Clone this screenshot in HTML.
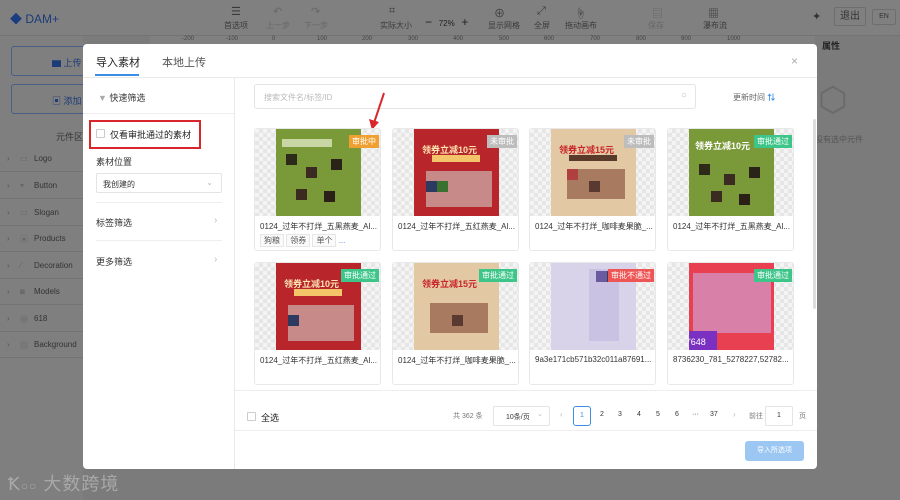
<!DOCTYPE html>
<html><head><meta charset="utf-8"><style>
*{margin:0;padding:0;box-sizing:border-box}
body{width:900px;height:500px;overflow:hidden;position:relative;background:#7b7b7b;font-family:"Liberation Sans","Noto Sans CJK SC",sans-serif;color:#333;font-size:9px}
.a{position:absolute}
.top{left:0;top:0;width:900px;height:36px;background:#808080;border-bottom:1px solid #747474}
.tb{position:absolute;top:20px;font-size:8px;color:#3a3a3a;text-align:center}
.tbi{position:absolute;top:5px;font-size:11px;color:#3a3a3a}
.side{left:0;top:36px;width:83px;height:464px;background:#7f7f7f}
.row{position:absolute;left:0;width:83px;height:26px;border-bottom:1px solid #737373;font-size:8px;color:#333}
.modal{left:83px;top:44px;width:734px;height:425px;background:#fff;border-radius:4px}
.card{position:absolute;width:127px;height:123px;border:1px solid #e8e8e8;border-radius:3px;background:#fff}
.img{position:absolute;left:0;top:0;width:125px;height:87px;background-color:#f4f4f4;background-image:linear-gradient(45deg,#e6e6e6 25%,transparent 25%,transparent 75%,#e6e6e6 75%),linear-gradient(45deg,#e6e6e6 25%,transparent 25%,transparent 75%,#e6e6e6 75%);background-size:8px 8px;background-position:0 0,4px 4px}
.pic{position:absolute;left:21px;top:0;width:85px;height:87px}
.badge{position:absolute;top:6px;right:1px;color:#fff;font-size:8px;padding:1px 3px}
.fn{position:absolute;left:5px;top:92px;font-size:8px;color:#333;white-space:nowrap}
.px{position:absolute;width:11px;height:11px}
.pg{position:absolute;top:367px;font-size:7px;color:#333}
</style></head><body>
<div class="a top">
 <div class="a" style="left:10px;top:10px;font-size:12px;color:#1a3d80;font-weight:bold">◆<span style="font-weight:normal;color:#1d3b78"> DAM+</span></div>
 <div class="tbi" style="left:231px">☰</div><div class="tb" style="left:224px">首选项</div>
 <div class="tbi" style="left:273px;color:#666">↶</div><div class="tb" style="left:266px;color:#666">上一步</div>
 <div class="tbi" style="left:311px;color:#666">↷</div><div class="tb" style="left:304px;color:#666">下一步</div>
 <div class="tbi" style="left:389px">⌗</div><div class="tb" style="left:380px">实际大小</div>
 <div class="a" style="left:425px;top:15px;font-size:12px;color:#222">−&nbsp; <span style="font-size:8px">72%</span> &nbsp;+</div>
 <div class="tbi" style="left:494px">⊕</div><div class="tb" style="left:488px">显示网格</div>
 <div class="tbi" style="left:537px">⤢</div><div class="tb" style="left:534px">全屏</div>
 <div class="tbi" style="left:575px">☝</div><div class="tb" style="left:565px">拖动画布</div>
 <div class="tbi" style="left:652px;color:#666">▤</div><div class="tb" style="left:648px;color:#666">保存</div>
 <div class="tbi" style="left:708px">▦</div><div class="tb" style="left:703px">瀑布流</div>
 <div class="a" style="left:812px;top:10px;font-size:11px">✦</div>
 <div class="a" style="left:834px;top:7px;width:32px;height:19px;border:1px solid #6e6e6e;border-radius:2px;font-size:10px;text-align:center;line-height:17px">退出</div>
 <div class="a" style="left:872px;top:9px;width:24px;height:16px;border:1px solid #6e6e6e;border-radius:2px;font-size:7px;text-align:center;line-height:14px">EN</div>
</div>
<div class="a" style="left:150px;top:36px;width:665px;height:9px;background:#808080;border-bottom:1px solid #6f6f6f;font-size:6px;color:#444">
 <span class="a" style="left:32px">-200</span><span class="a" style="left:76px">-100</span><span class="a" style="left:122px">0</span><span class="a" style="left:167px">100</span><span class="a" style="left:212px">200</span><span class="a" style="left:258px">300</span><span class="a" style="left:303px">400</span><span class="a" style="left:349px">500</span><span class="a" style="left:394px">600</span><span class="a" style="left:440px">700</span><span class="a" style="left:486px">800</span><span class="a" style="left:531px">900</span><span class="a" style="left:577px">1000</span>
</div>
<div class="a side">
 <div class="a" style="left:11px;top:10px;width:80px;height:30px;border:1px solid #4a5f86;border-radius:3px;color:#1d3b78;font-size:9px;padding:9px 0 0 40px"><span style="color:#1d3b78">▆</span> 上传</div>
 <div class="a" style="left:11px;top:48px;width:80px;height:30px;border:1px solid #4a5f86;border-radius:3px;color:#1d3b78;font-size:9px;padding:9px 0 0 40px">▣ 添加</div>
 <div class="a" style="left:56px;top:94px;font-size:9px">元件区</div>
 <div class="row" style="top:110px"><span class="a" style="left:7px;top:8px;color:#555">›</span><span class="a" style="left:20px;top:8px;color:#666">▭</span><span class="a" style="left:34px;top:8px">Logo</span></div>
 <div class="row" style="top:137px"><span class="a" style="left:7px;top:8px;color:#555">›</span><span class="a" style="left:20px;top:8px;color:#666">▾</span><span class="a" style="left:34px;top:8px">Button</span></div>
 <div class="row" style="top:164px"><span class="a" style="left:7px;top:8px;color:#555">›</span><span class="a" style="left:20px;top:8px;color:#666">▭</span><span class="a" style="left:34px;top:8px">Slogan</span></div>
 <div class="row" style="top:190px"><span class="a" style="left:7px;top:8px;color:#555">›</span><span class="a" style="left:20px;top:8px;color:#666">▣</span><span class="a" style="left:34px;top:8px">Products</span></div>
 <div class="row" style="top:217px"><span class="a" style="left:7px;top:8px;color:#555">›</span><span class="a" style="left:20px;top:8px;color:#666">⁄</span><span class="a" style="left:34px;top:8px">Decoration</span></div>
 <div class="row" style="top:243px"><span class="a" style="left:7px;top:8px;color:#555">›</span><span class="a" style="left:20px;top:8px;color:#666">◙</span><span class="a" style="left:34px;top:8px">Models</span></div>
 <div class="row" style="top:270px"><span class="a" style="left:7px;top:8px;color:#555">›</span><span class="a" style="left:20px;top:8px;color:#666">▦</span><span class="a" style="left:34px;top:8px">618</span></div>
 <div class="row" style="top:296px"><span class="a" style="left:7px;top:8px;color:#555">›</span><span class="a" style="left:20px;top:8px;color:#666">▨</span><span class="a" style="left:34px;top:8px">Background</span></div>
</div>
<div class="a" style="left:822px;top:39px;font-size:9px;font-weight:bold;color:#222">属性</div>
<div class="a" style="left:818px;top:80px;font-size:34px;color:#6a6a6a">⬡</div>
<div class="a" style="left:815px;top:134px;font-size:8px;color:#555">没有选中元件</div>
<div class="a" style="left:8px;top:470px;font-size:18px;color:#a8a8a8;letter-spacing:1px">Ꝁ<span style="font-size:12px">○○</span> 大数跨境</div>

<div class="a modal">
 <div class="a" style="left:13px;top:10px;font-size:11px;color:#222">导入素材</div>
 <div class="a" style="left:12px;top:30px;width:44px;height:2px;background:#3a8ee6"></div>
 <div class="a" style="left:79px;top:10px;font-size:11px;color:#555">本地上传</div>
 <div class="a" style="left:708px;top:10px;font-size:12px;color:#aaa">×</div>
 <div class="a" style="left:0;top:33px;width:734px;height:1px;background:#e9e9e9"></div>
 <div class="a" style="left:151px;top:34px;width:1px;height:391px;background:#e9e9e9"></div>
 <div class="a" style="left:15px;top:47px;font-size:9px;color:#333"><span style="color:#aaa">▼</span> 快速筛选</div>
 <div class="a" style="left:0;top:69px;width:151px;height:1px;background:#eee"></div>
 <div class="a" style="left:6px;top:76px;width:112px;height:29px;border:2px solid #d8262a"></div>
 <div class="a" style="left:13px;top:85px;width:9px;height:9px;border:1px solid #ccc;border-radius:1px"></div>
 <div class="a" style="left:27px;top:84px;font-size:9px;color:#222">仅看审批通过的素材</div>
 <div class="a" style="left:13px;top:111px;font-size:9px">素材位置</div>
 <div class="a" style="left:13px;top:129px;width:126px;height:20px;border:1px solid #e4e4e4;border-radius:2px;font-size:8px;padding:5px 0 0 6px">我创建的<span class="a" style="right:8px;top:4px;color:#bbb">⌄</span></div>
 <div class="a" style="left:13px;top:158px;width:126px;height:1px;background:#eee"></div>
 <div class="a" style="left:13px;top:172px;font-size:9px">标签筛选</div><div class="a" style="left:131px;top:171px;color:#bbb;font-size:10px">›</div>
 <div class="a" style="left:13px;top:196px;width:126px;height:1px;background:#eee"></div>
 <div class="a" style="left:13px;top:211px;font-size:9px">更多筛选</div><div class="a" style="left:131px;top:210px;color:#bbb;font-size:10px">›</div>

 <div class="a" style="left:171px;top:40px;width:442px;height:25px;border:1px solid #e4e4e4;border-radius:3px;font-size:8px;color:#bbb;padding:7px 0 0 9px">搜索文件名/标签/ID<span class="a" style="right:8px;top:5px;font-size:10px">○</span></div>
 <div class="a" style="left:650px;top:48px;font-size:8px;color:#666">更新时间 <span style="color:#3a8ee6;font-weight:bold">⇅</span></div>
 <div class="a" style="left:730px;top:75px;width:3px;height:190px;background:#ddd;border-radius:2px"></div>
 <svg class="a" style="left:283px;top:47px" width="22" height="40"><line x1="18" y1="2" x2="8" y2="32" stroke="#d8262a" stroke-width="2"/><polygon points="3,28 13,31 6,39" fill="#d8262a"/></svg>

 <div class="card" style="left:171px;top:84px"><div class="img"><div class="pic" style="background:#7a9a3a"><div class="px" style="left:10px;top:25px;background:#2d2a1a"></div><div class="px" style="left:30px;top:38px;background:#3a2a22"></div><div class="px" style="left:55px;top:30px;background:#2a2418"></div><div class="px" style="left:20px;top:60px;background:#3a2a20"></div><div class="px" style="left:48px;top:62px;background:#2a2018"></div><div class="a" style="left:6px;top:10px;width:50px;height:8px;background:#e8efd0;opacity:.7"></div></div><div class="badge" style="background:#f0a030">审批中</div></div><div class="fn">0124_过年不打烊_五黑燕麦_Al...</div>
  <div class="a" style="left:5px;top:106px;font-size:8px;color:#555"><span style="border:1px solid #e6e6e6;padding:1px 3px;background:#fafafa">狗粮</span> <span style="border:1px solid #e6e6e6;padding:1px 3px;background:#fafafa">领券</span> <span style="border:1px solid #e6e6e6;padding:1px 3px;background:#fafafa">单个</span> <span style="color:#3a8ee6">...</span></div></div>
 <div class="card" style="left:309px;top:84px"><div class="img"><div class="pic" style="background:#b8262c"><div class="a" style="left:8px;top:14px;font-size:9px;color:#ffe3b0;font-weight:bold">领券立减10元</div><div class="a" style="left:18px;top:26px;width:48px;height:7px;background:#f3c46a"></div><div class="a" style="left:12px;top:42px;width:66px;height:36px;background:#c88a88"></div><div class="px" style="left:12px;top:52px;background:#2d3a60"></div><div class="px" style="left:23px;top:52px;background:#3a7030"></div></div><div class="badge" style="background:#bdbdbd">未审批</div></div><div class="fn">0124_过年不打烊_五红燕麦_Al...</div></div>
 <div class="card" style="left:446px;top:84px"><div class="img"><div class="pic" style="background:#e2c9a3"><div class="a" style="left:8px;top:14px;font-size:9px;color:#c8242a;font-weight:bold">领券立减15元</div><div class="a" style="left:18px;top:26px;width:48px;height:6px;background:#5a3a2a"></div><div class="a" style="left:16px;top:40px;width:58px;height:30px;background:#a87a60"></div><div class="px" style="left:16px;top:40px;background:#b04040"></div><div class="px" style="left:38px;top:52px;background:#5a3a30"></div></div><div class="badge" style="background:#bdbdbd">未审批</div></div><div class="fn">0124_过年不打烊_咖啡麦果脆_...</div></div>
 <div class="card" style="left:584px;top:84px"><div class="img"><div class="pic" style="background:#7a9a3a"><div class="a" style="left:6px;top:10px;font-size:9px;color:#fff;font-weight:bold">领券立减10元</div><div class="px" style="left:10px;top:35px;background:#2d2a1a"></div><div class="px" style="left:35px;top:45px;background:#3a2a22"></div><div class="px" style="left:60px;top:38px;background:#2a2418"></div><div class="px" style="left:22px;top:62px;background:#3a2a20"></div><div class="px" style="left:50px;top:65px;background:#2a2018"></div></div><div class="badge" style="background:#3ec58a">审批通过</div></div><div class="fn">0124_过年不打烊_五黑燕麦_Al...</div></div>

 <div class="card" style="left:171px;top:218px"><div class="img"><div class="pic" style="background:#b8262c"><div class="a" style="left:8px;top:14px;font-size:9px;color:#ffe3b0;font-weight:bold">领券立减10元</div><div class="a" style="left:18px;top:26px;width:48px;height:7px;background:#f3c46a"></div><div class="a" style="left:12px;top:42px;width:66px;height:36px;background:#c88a88"></div><div class="px" style="left:12px;top:52px;background:#2d3a60"></div></div><div class="badge" style="background:#3ec58a">审批通过</div></div><div class="fn">0124_过年不打烊_五红燕麦_Al...</div></div>
 <div class="card" style="left:309px;top:218px"><div class="img"><div class="pic" style="background:#e2c9a3"><div class="a" style="left:8px;top:14px;font-size:9px;color:#c8242a;font-weight:bold">领券立减15元</div><div class="a" style="left:16px;top:40px;width:58px;height:30px;background:#a87a60"></div><div class="px" style="left:38px;top:52px;background:#5a3a30"></div></div><div class="badge" style="background:#3ec58a">审批通过</div></div><div class="fn">0124_过年不打烊_咖啡麦果脆_...</div></div>
 <div class="card" style="left:446px;top:218px"><div class="img"><div class="pic" style="background:#d9d3ea"><div class="a" style="left:38px;top:6px;width:30px;height:72px;background:#c9c2e2"></div><div class="px" style="left:45px;top:8px;background:#6a5aa0"></div><div class="px" style="left:56px;top:8px;background:#3a3a5a"></div></div><div class="badge" style="background:#ee5555">审批不通过</div></div><div class="fn">9a3e171cb571b32c011a87691...</div></div>
 <div class="card" style="left:584px;top:218px"><div class="img"><div class="pic" style="background:#e84050"><div class="a" style="left:4px;top:10px;width:78px;height:60px;background:#d880a8"></div><div class="a" style="left:0;top:68px;width:28px;height:19px;background:#7a30c0;color:#fff;font-size:9px;padding-top:6px">'648</div></div><div class="badge" style="background:#3ec58a">审批通过</div></div><div class="fn">8736230_781_5278227,52782...</div></div>

 <div class="a" style="left:152px;top:346px;width:582px;height:1px;background:#eee"></div>
 <div class="a" style="left:164px;top:368px;width:9px;height:9px;border:1px solid #ccc;border-radius:1px"></div>
 <div class="a" style="left:178px;top:367px;font-size:9px;color:#222">全选</div>
 <div class="a" style="left:370px;top:367px;font-size:7px;color:#777">共 362 条</div>
 <div class="a" style="left:410px;top:362px;width:57px;height:20px;border:1px solid #e4e4e4;border-radius:2px;font-size:7px;padding:5px 0 0 12px">10条/页<span class="a" style="right:6px;top:3px;color:#bbb">⌄</span></div>
 <div class="a" style="left:477px;top:366px;font-size:8px;color:#bbb">‹</div>
 <div class="a" style="left:490px;top:362px;width:18px;height:20px;border:1px solid #3a8ee6;border-radius:3px;font-size:7px;color:#3a8ee6;text-align:center;line-height:18px">1</div>
 <div class="pg" style="left:517px">2</div>
 <div class="pg" style="left:535px">3</div>
 <div class="pg" style="left:554px">4</div>
 <div class="pg" style="left:573px">5</div>
 <div class="pg" style="left:592px">6</div>
 <div class="pg" style="left:609px">···</div>
 <div class="pg" style="left:627px">37</div>
 <div class="a" style="left:650px;top:366px;font-size:8px;color:#bbb">›</div>
 <div class="a" style="left:666px;top:367px;font-size:7px;color:#777">前往</div>
 <div class="a" style="left:682px;top:362px;width:28px;height:20px;border:1px solid #e4e4e4;border-radius:2px;font-size:7px;text-align:center;line-height:18px">1</div>
 <div class="a" style="left:716px;top:367px;font-size:7px;color:#777">页</div>
 <div class="a" style="left:152px;top:386px;width:582px;height:1px;background:#eee"></div>
 <div class="a" style="left:662px;top:397px;width:59px;height:20px;background:#9cc7f3;border-radius:3px;font-size:7px;color:#fff;text-align:center;line-height:20px">导入所选项</div>
</div>
</body></html>
